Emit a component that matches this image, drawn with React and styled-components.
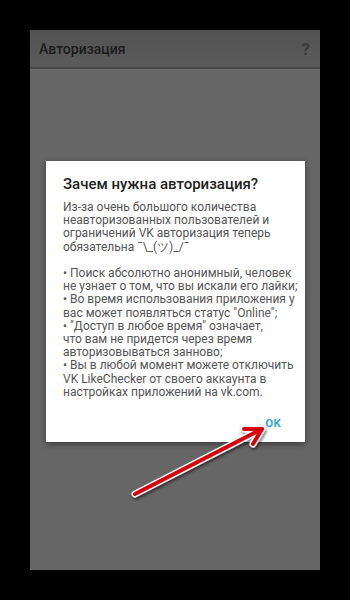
import React from 'react';
import styled, { createGlobalStyle } from 'styled-components';

const GlobalStyle = createGlobalStyle`
	html, body {
		margin: 0;
		padding: 0;
		background: #000;
	}
	body {
		font-family: Roboto, 'Noto Sans', 'Liberation Sans', sans-serif;
	}
`;

const Frame = styled.div`
	position: relative;
	width: 350px;
	height: 600px;
	padding: 30px;
	box-sizing: border-box;
	background: #000;
	overflow: hidden;
`;

const Screen = styled.div`
	width: 290px;
	height: 540px;
	display: flex;
	flex-direction: column;
	background: #666;
`;

const AppBar = styled.div`
	display: flex;
	align-items: center;
	justify-content: space-between;
	height: 37px;
	padding: 0 10px 0 9px;
	background: linear-gradient(#525252, #5b5b5b);
	border-bottom: 2px solid #474747;
	box-shadow: 0 1px 0 #6e6e6e;

	.bar {
		&-title {
			margin: 0;
			font-size: 14px;
			font-weight: 500;
			color: #1c1c1c;
		}

		&-help {
			font-size: 17px;
			font-weight: 700;
			color: #3b3b3b;
		}
	}
`;

const Content = styled.div`
	flex: 1;
	padding: 92px 15px 0 16px;
`;

const Dialog = styled.div`
	width: 259px;
	height: 281px;
	box-sizing: border-box;
	padding: 14px 10px 0 17px;
	display: flex;
	flex-direction: column;
	background: #fff;
	box-shadow: 0 2px 6px rgba(0, 0, 0, 0.45);
`;

const DialogTitle = styled.h2`
	margin: 0 0 8px;
	font-size: 15px;
	line-height: 18px;
	font-weight: 500;
	color: #222;
`;

const DialogText = styled.p`
	margin: 0;
	font-size: 12px;
	line-height: 13.2px;
	color: #555;
	white-space: nowrap;
	margin-bottom: ${(p) => (p.$gap ? '13.2px' : '0')};
`;

const Actions = styled.div`
	display: flex;
	justify-content: flex-end;
	padding: 17px 14px 0 0;
`;

const OkButton = styled.span`
	font-size: 11.5px;
	font-weight: 700;
	color: #38a6c6;
	letter-spacing: 0.2px;
`;

const Arrow = styled.svg`
	position: absolute;
	left: 123px;
	top: 418px;
	width: 160px;
	height: 95px;
	overflow: visible;
`;

const intro = [
	'Из-за очень большого количества',
	'неавторизованных пользователей и',
	'ограничений VK авторизация теперь',
	'обязательна ¯\\_(ツ)_/¯',
];

const points = [
	'• Поиск абсолютно анонимный, человек',
	'не узнает о том, что вы искали его лайки;',
	'• Во время использования приложения у',
	'вас может появляться статус "Online";',
	'• "Доступ в любое время" означает,',
	'что вам не придется через время',
	'авторизовываться занново;',
	'• Вы в любой момент можете отключить',
	'VK LikeChecker от своего аккаунта в',
	'настройках приложений на vk.com.',
];

function withBreaks(lines) {
	return lines.map((line, i) => (
		<React.Fragment key={i}>
			{line}
			{i < lines.length - 1 && <br />}
		</React.Fragment>
	));
}

export default function App() {
	return (
		<>
			<GlobalStyle />
			<Frame>
				<Screen>
					<AppBar>
						<p className='bar-title'>Авторизация</p>
						<span className='bar-help'>?</span>
					</AppBar>
					<Content>
						<Dialog>
							<DialogTitle>Зачем нужна авторизация?</DialogTitle>
							<DialogText $gap>{withBreaks(intro)}</DialogText>
							<DialogText>{withBreaks(points)}</DialogText>
							<Actions>
								<OkButton>OK</OkButton>
							</Actions>
						</Dialog>
					</Content>
				</Screen>
				<Arrow viewBox='0 0 160 95'>
					<defs>
						<filter id='shadow' x='-20%' y='-20%' width='140%' height='140%'>
							<feDropShadow dx='1' dy='2' stdDeviation='1.6' floodColor='#000' floodOpacity='0.55' />
						</filter>
					</defs>
					<g filter='url(#shadow)' strokeLinecap='round' strokeLinejoin='round' fill='none'>
						<path d='M12 76 L139 11 M121 11 L139 11 L130 26' stroke='#fff' strokeWidth='7' />
						<path d='M12 76 L139 11 M121 11 L139 11 L130 26' stroke='#d8000a' strokeWidth='4' />
					</g>
				</Arrow>
			</Frame>
		</>
	);
}
